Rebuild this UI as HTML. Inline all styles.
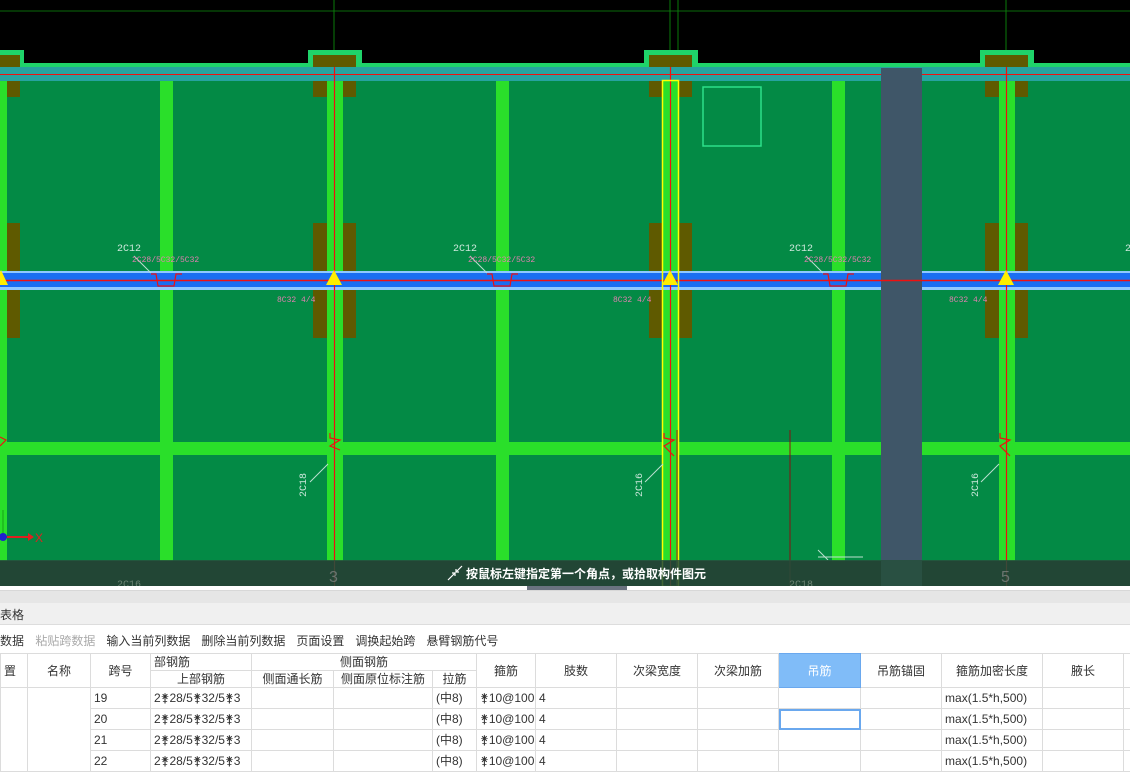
<!DOCTYPE html>
<html><head><meta charset="utf-8"><style>
body{margin:0;width:1130px;height:760px;overflow:hidden;background:#fff;font-family:"Liberation Sans","Noto Sans CJK SC",sans-serif;position:relative}
svg{position:absolute;left:0;top:0}
.t{position:absolute;font-size:12px;color:#333;white-space:nowrap}
table{position:absolute;left:0;top:653px;width:1143px;border-collapse:collapse;font-size:12px;color:#333;table-layout:fixed}
td{border:1px solid #dcdcdc;height:20px;line-height:20px;padding:0;text-align:center;overflow:hidden;white-space:nowrap}
td.l{text-align:left;text-indent:3px}
tr.h td{height:16px;line-height:16px}
</style></head><body>
<svg width="1130" height="590" viewBox="0 0 1130 590">
<rect width="1130" height="590" fill="#000"/>
<line x1="0" y1="11" x2="1130" y2="11" stroke="#0a6a0a"/>
<line x1="334" y1="0" x2="334" y2="70" stroke="#0a7a0a"/>
<line x1="670" y1="0" x2="670" y2="70" stroke="#0a7a0a"/>
<line x1="678" y1="0" x2="678" y2="70" stroke="#0a7a0a"/>
<line x1="1006" y1="0" x2="1006" y2="70" stroke="#0a7a0a"/>
<rect x="0" y="63" width="1130" height="6" fill="#1fd36a"/>
<g fill="#1fd36a">
<rect x="-30" y="50" width="54" height="16"/><rect x="308" y="50" width="54" height="16"/><rect x="644" y="50" width="54" height="16"/><rect x="980" y="50" width="54" height="16"/></g>
<g fill="#5f5a00">
<rect x="-10" y="55" width="30" height="12"/><rect x="313" y="55" width="43" height="12"/><rect x="649" y="55" width="43" height="12"/><rect x="985" y="55" width="43" height="12"/></g>
<rect x="0" y="81" width="1130" height="480" fill="#038a45"/>
<rect x="0" y="67" width="1130" height="14" fill="#26a3a0"/>
<line x1="0" y1="74.5" x2="1130" y2="74.5" stroke="#f01010"/>
<g fill="#5f5a00">
<rect x="0" y="81" width="20" height="16"/><rect x="0" y="223" width="20" height="115"/>
<rect x="313" y="81" width="43" height="16"/><rect x="313" y="223" width="43" height="115"/>
<rect x="649" y="81" width="43" height="16"/><rect x="649" y="223" width="43" height="115"/>
<rect x="985" y="81" width="43" height="16"/><rect x="985" y="223" width="43" height="115"/>
</g>
<rect x="0" y="442" width="1130" height="13" fill="#2adf2a"/>
<g fill="#2adf2a">
<rect x="0" y="81" width="7" height="480"/><rect x="160" y="81" width="13" height="480"/><rect x="327" y="81" width="16" height="480"/><rect x="496" y="81" width="13" height="480"/><rect x="663" y="81" width="16" height="480"/><rect x="832" y="81" width="13" height="480"/><rect x="999" y="81" width="16" height="480"/></g>
<rect x="0" y="271" width="1130" height="19" fill="#8fc8ff"/>
<rect x="0" y="273" width="1130" height="14" fill="#1a6ef2"/>
<rect x="881" y="68" width="41" height="520" fill="#3f5668"/>
<line x1="0" y1="280.5" x2="1130" y2="280.5" stroke="#f01010" stroke-width="1.5"/>
<g stroke="#f01010" stroke-width="1.2"><line x1="334.5" y1="67" x2="334.5" y2="586"/><line x1="670.5" y1="67" x2="670.5" y2="586"/><line x1="1006.5" y1="67" x2="1006.5" y2="586"/></g>
<rect x="662.5" y="80.5" width="16" height="506" fill="none" stroke="#ffff00" stroke-width="1.5"/>
<rect x="703" y="87" width="58" height="59" fill="none" stroke="#2de08a" stroke-width="1.5"/>
<g fill="#ffee00"><polygon points="-6,285 8,285 1,270"/><polygon points="326,285 342,285 334,270"/><polygon points="662,285 678,285 670,270"/><polygon points="998,285 1014,285 1006,270"/></g>
<g fill="none" stroke="#f01010" stroke-width="1.2">
<polyline points="151,274 156,274 158,286 174,286 176,274 182,274"/>
<polyline points="487,274 492,274 494,286 510,286 512,274 518,274"/>
<polyline points="823,274 828,274 830,286 846,286 848,274 854,274"/>
<polyline points="0,437 6,440 0,446"/><polyline points="330,433 330,438 340,440 330,446 340,450"/><polyline points="664,433 664,438 674,440 664,446 674,456"/><polyline points="1000,433 1000,438 1010,440 1000,446 1010,456"/>
</g>
<line x1="790" y1="430" x2="790" y2="586" stroke="#8a1010"/>
<line x1="677" y1="430" x2="677" y2="586" stroke="#8a6010" stroke-width="1.5"/>
<g stroke="#bde0d0" stroke-width="1"><line x1="134" y1="256" x2="151" y2="273"/><line x1="470" y1="256" x2="487" y2="273"/><line x1="806" y1="256" x2="823" y2="273"/><line x1="310" y1="482" x2="328" y2="464"/><line x1="645" y1="482" x2="663" y2="464"/><line x1="981" y1="482" x2="999" y2="464"/><line x1="818" y1="557" x2="863" y2="557"/><line x1="818" y1="550" x2="828" y2="560"/></g>
<g font-family="Liberation Mono,monospace" font-size="10" fill="#cde8dc">
<text x="117" y="251">2C12</text><text x="453" y="251">2C12</text><text x="789" y="251">2C12</text><text x="1125" y="251">2</text>
<text transform="translate(306,497) rotate(-90)">2C18</text><text transform="translate(642,497) rotate(-90)">2C16</text><text transform="translate(978,497) rotate(-90)">2C16</text>
</g>
<g font-family="Liberation Mono,monospace" font-size="8" fill="#e080b0">
<text x="132" y="262">2C28/5C32/5C32</text><text x="468" y="262">2C28/5C32/5C32</text><text x="804" y="262">2C28/5C32/5C32</text>
<text x="277" y="302">8C32 4/4</text><text x="613" y="302">8C32 4/4</text><text x="949" y="302">8C32 4/4</text>
</g>
<line x1="0" y1="537" x2="28" y2="537" stroke="#e02020" stroke-width="2"/><polygon points="28,533 34,537 28,541" fill="#e02020"/>
<text x="35" y="542" font-size="12" fill="#e02020" font-family="Liberation Sans">X</text>
<line x1="3" y1="537" x2="3" y2="510" stroke="#20c020" stroke-width="2"/><circle cx="3" cy="537" r="4" fill="#2020d0"/>
<rect x="0" y="560" width="1130" height="26" fill="#27503c" opacity="0.88"/>
<g font-family="Liberation Sans" font-size="16" fill="#888" opacity="0.7"><text x="329" y="582">3</text><text x="1001" y="582">5</text></g>
<g font-family="Liberation Mono,monospace" font-size="10" fill="#9a9" opacity="0.6"><text x="117" y="587">2C16</text><text x="789" y="587">2C18</text></g>
<text x="466" y="578" font-size="12" font-weight="bold" fill="#fff" font-family="Liberation Sans,Noto Sans CJK SC,sans-serif">按鼠标左键指定第一个角点，或拾取构件图元</text>
<g stroke="#fff" stroke-width="1.2" fill="none"><line x1="448" y1="580" x2="455" y2="573"/><polyline points="452,573 455,573 455,576"/><line x1="456" y1="572" x2="462" y2="566"/><polyline points="456,569 456,572 459,572"/></g>
<rect x="0" y="586" width="1130" height="4" fill="#fff"/>
<rect x="527" y="586" width="100" height="4" fill="#6b7380"/>
</svg>
<div style="position:absolute;left:0;top:590px;width:1130px;height:13px;background:#e6e6e6;border-top:1px solid #d8d8d8;box-sizing:border-box"></div>
<div style="position:absolute;left:0;top:603px;width:1130px;height:22px;background:#f0f0f0;border-bottom:1px solid #ddd;box-sizing:border-box"></div>
<div class="t" style="left:0;top:606px;font-size:12px">表格</div>
<div class="t" style="left:0;top:632px">数据 <span style="color:#aaa;margin-left:8px">粘贴跨数据</span><span style="margin-left:11px">输入当前列数据</span><span style="margin-left:11px">删除当前列数据</span><span style="margin-left:11px">页面设置</span><span style="margin-left:11px">调换起始跨</span><span style="margin-left:11px">悬臂钢筋代号</span></div>
<table>
<colgroup><col style="width:27px"><col style="width:63px"><col style="width:60px"><col style="width:101px"><col style="width:82px"><col style="width:99px"><col style="width:44px"><col style="width:59px"><col style="width:81px"><col style="width:81px"><col style="width:81px"><col style="width:82px"><col style="width:81px"><col style="width:101px"><col style="width:81px"><col style="width:20px"></colgroup>
<tr class="h"><td rowspan="2" class="l">置</td><td rowspan="2">名称</td><td rowspan="2">跨号</td><td class="l">部钢筋</td><td colspan="3">侧面钢筋</td><td rowspan="2">箍筋</td><td rowspan="2">肢数</td><td rowspan="2">次梁宽度</td><td rowspan="2">次梁加筋</td><td rowspan="2" style="background:#80bcf8;color:#fff;border-color:#6aa8ee">吊筋</td><td rowspan="2">吊筋锚固</td><td rowspan="2">箍筋加密长度</td><td rowspan="2">腋长</td><td rowspan="2"></td></tr>
<tr class="h"><td>上部钢筋</td><td>侧面通长筋</td><td>侧面原位标注筋</td><td>拉筋</td></tr>
<tr><td rowspan="4"></td><td rowspan="4"></td><td class="l">19</td><td class="l">2⚵28/5⚵32/5⚵3</td><td></td><td></td><td class="l">(中8)</td><td class="l">⚵10@100</td><td class="l">4</td><td></td><td></td><td></td><td></td><td class="l">max(1.5*h,500)</td><td></td><td></td></tr>
<tr><td class="l">20</td><td class="l">2⚵28/5⚵32/5⚵3</td><td></td><td></td><td class="l">(中8)</td><td class="l">⚵10@100</td><td class="l">4</td><td></td><td></td><td style="outline:2px solid #6aa8ee;outline-offset:-2px"></td><td></td><td class="l">max(1.5*h,500)</td><td></td><td></td></tr>
<tr><td class="l">21</td><td class="l">2⚵28/5⚵32/5⚵3</td><td></td><td></td><td class="l">(中8)</td><td class="l">⚵10@100</td><td class="l">4</td><td></td><td></td><td></td><td></td><td class="l">max(1.5*h,500)</td><td></td><td></td></tr>
<tr><td class="l">22</td><td class="l">2⚵28/5⚵32/5⚵3</td><td></td><td></td><td class="l">(中8)</td><td class="l">⚵10@100</td><td class="l">4</td><td></td><td></td><td></td><td></td><td class="l">max(1.5*h,500)</td><td></td><td></td></tr>
</table>
</body></html>
